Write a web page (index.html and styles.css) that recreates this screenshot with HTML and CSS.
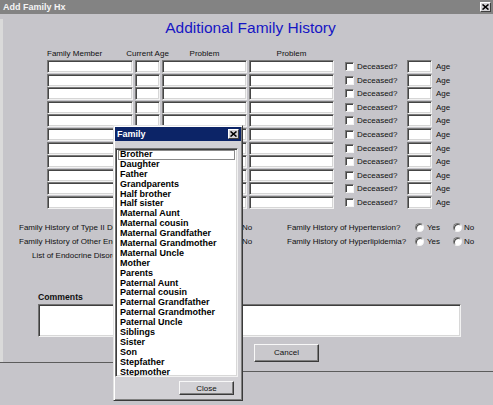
FILE: index.html
```html
<!DOCTYPE html>
<html>
<head>
<meta charset="utf-8">
<title>Add Family Hx</title>
<link rel="stylesheet" href="styles.css">
</head>
<body>
<div class="window">
  <div class="titlebar">
    <span class="title">Add Family Hx</span>
    <span class="x-btn"><svg width="7" height="6" viewBox="0 0 7 6"><path d="M0.5 0.5 L6.5 5.5 M6.5 0.5 L0.5 5.5" stroke="#000" stroke-width="1.6" fill="none"/></svg></span>
  </div>
  <div class="main">
    <h1 class="heading">Additional Family History</h1>
    <div class="head-row">
      <div class="hc w-fm left">Family Member</div>
      <div class="hc w-ca">Current Age</div>
      <div class="hc w-p">Problem</div>
      <div class="hc w-p">Problem</div>
    </div>
    <div class="rows">
      <div class="row"><input class="field w-fm"><input class="field w-ca"><input class="field w-p"><input class="field w-p"><input type="checkbox" class="chk"><span class="dec">Deceased?</span><input class="field w-age"><span class="age">Age</span></div>
      <div class="row"><input class="field w-fm"><input class="field w-ca"><input class="field w-p"><input class="field w-p"><input type="checkbox" class="chk"><span class="dec">Deceased?</span><input class="field w-age"><span class="age">Age</span></div>
      <div class="row"><input class="field w-fm"><input class="field w-ca"><input class="field w-p"><input class="field w-p"><input type="checkbox" class="chk"><span class="dec">Deceased?</span><input class="field w-age"><span class="age">Age</span></div>
      <div class="row"><input class="field w-fm"><input class="field w-ca"><input class="field w-p"><input class="field w-p"><input type="checkbox" class="chk"><span class="dec">Deceased?</span><input class="field w-age"><span class="age">Age</span></div>
      <div class="row"><input class="field w-fm"><input class="field w-ca"><input class="field w-p"><input class="field w-p"><input type="checkbox" class="chk"><span class="dec">Deceased?</span><input class="field w-age"><span class="age">Age</span></div>
      <div class="row"><input class="field w-fm"><input class="field w-ca"><input class="field w-p"><input class="field w-p"><input type="checkbox" class="chk"><span class="dec">Deceased?</span><input class="field w-age"><span class="age">Age</span></div>
      <div class="row"><input class="field w-fm"><input class="field w-ca"><input class="field w-p"><input class="field w-p"><input type="checkbox" class="chk"><span class="dec">Deceased?</span><input class="field w-age"><span class="age">Age</span></div>
      <div class="row"><input class="field w-fm"><input class="field w-ca"><input class="field w-p"><input class="field w-p"><input type="checkbox" class="chk"><span class="dec">Deceased?</span><input class="field w-age"><span class="age">Age</span></div>
      <div class="row"><input class="field w-fm"><input class="field w-ca"><input class="field w-p"><input class="field w-p"><input type="checkbox" class="chk"><span class="dec">Deceased?</span><input class="field w-age"><span class="age">Age</span></div>
      <div class="row"><input class="field w-fm"><input class="field w-ca"><input class="field w-p"><input class="field w-p"><input type="checkbox" class="chk"><span class="dec">Deceased?</span><input class="field w-age"><span class="age">Age</span></div>
      <div class="row"><input class="field w-fm"><input class="field w-ca"><input class="field w-p"><input class="field w-p"><input type="checkbox" class="chk"><span class="dec">Deceased?</span><input class="field w-age"><span class="age">Age</span></div>
    </div>
    <div class="q-rows">
      <div class="q-row">
        <div class="q-left">
          <span class="q-label">Family History of Type II Diabetes?</span>
          <input type="radio" name="dm" class="radio"><span class="r-yes">Yes</span>
          <input type="radio" name="dm" class="radio"><span class="r-no">No</span>
        </div>
        <div class="q-right">
          <span class="q-label-r">Family History of Hypertension?</span>
          <input type="radio" name="htn" class="radio"><span class="r-yes">Yes</span>
          <input type="radio" name="htn" class="radio"><span class="r-no">No</span>
        </div>
      </div>
      <div class="q-row">
        <div class="q-left">
          <span class="q-label">Family History of Other Endocrine?</span>
          <input type="radio" name="en" class="radio"><span class="r-yes">Yes</span>
          <input type="radio" name="en" class="radio"><span class="r-no">No</span>
        </div>
        <div class="q-right">
          <span class="q-label-r">Family History of Hyperlipidemia?</span>
          <input type="radio" name="lip" class="radio"><span class="r-yes">Yes</span>
          <input type="radio" name="lip" class="radio"><span class="r-no">No</span>
        </div>
      </div>
      <div class="q-row">
        <div class="q-left">
          <span class="q-label indent">List of Endocrine Disorders</span>
        </div>
      </div>
    </div>
    <div class="comments-label">Comments</div>
    <div class="comments"></div>
    <div class="buttons">
      <button class="btn">OK</button>
      <button class="btn">Cancel</button>
    </div>
  </div>
  <div class="footer">
    <div class="f-left"></div>
    <div class="f-right"></div>
  </div>
</div>

<div class="dialog">
  <div class="dlg-title">
    <span>Family</span>
    <span class="x-btn"><svg width="7" height="6" viewBox="0 0 7 6"><path d="M0.5 0.5 L6.5 5.5 M6.5 0.5 L0.5 5.5" stroke="#000" stroke-width="1.6" fill="none"/></svg></span>
  </div>
  <ul class="listbox">
    <li class="focus">Brother</li>
    <li>Daughter</li>
    <li>Father</li>
    <li>Grandparents</li>
    <li>Half brother</li>
    <li>Half sister</li>
    <li>Maternal Aunt</li>
    <li>Maternal cousin</li>
    <li>Maternal Grandfather</li>
    <li>Maternal Grandmother</li>
    <li>Maternal Uncle</li>
    <li>Mother</li>
    <li>Parents</li>
    <li>Paternal Aunt</li>
    <li>Paternal cousin</li>
    <li>Paternal Grandfather</li>
    <li>Paternal Grandmother</li>
    <li>Paternal Uncle</li>
    <li>Siblings</li>
    <li>Sister</li>
    <li>Son</li>
    <li>Stepfather</li>
    <li>Stepmother</li>
  </ul>
  <div class="dlg-actions"><button class="btn btn-close">Close</button></div>
</div>
</body>
</html>
```

FILE: styles.css
```css
* { box-sizing: border-box; }
html, body { margin: 0; padding: 0; }
body {
  width: 493px;
  height: 405px;
  overflow: hidden;
  position: relative;
  background: #c6c5ca;
  font-family: "Liberation Sans", Arial, sans-serif;
  font-size: 8px;
  color: #101010;
}

.titlebar {
  height: 14px;
  background: #838383;
  display: flex;
  align-items: center;
  justify-content: space-between;
  padding: 0 2px 0 3px;
}
.title { color: #f4f4f4; font-weight: bold; font-size: 9px; }
.x-btn {
  width: 11px;
  height: 10px;
  background: #d4d3d6;
  border: 1px solid;
  border-color: #fff #404040 #404040 #fff;
  display: flex;
  align-items: center;
  justify-content: center;
}

.main { border-left: 3px solid #dadada; }

.heading {
  margin: 5px 0 0;
  padding-left: 5px;
  text-align: center;
  font-size: 15.5px;
  line-height: 18px;
  font-weight: normal;
  color: #1616c4;
}

.head-row {
  display: flex;
  margin: 12px 0 0 44px;
  height: 10px;
  line-height: 10px;
}
.hc { display: flex; justify-content: center; white-space: nowrap; }
.hc.left { justify-content: flex-start; }

.w-fm { width: 86px; }
.w-ca { width: 25px; margin-left: 2px; }
.w-p { width: 85px; margin-left: 2px; }
.w-age { width: 25px; }

.rows {
  margin: 1px 0 0 44px;
  display: flex;
  flex-direction: column;
  gap: 0.6px;
}
.row { display: flex; align-items: center; height: 13px; }

.field {
  height: 13px;
  margin-top: 0;
  margin-bottom: 0;
  padding: 0;
  background: #fff;
  border: 1px solid;
  border-color: #7a7a7a #f2f2f2 #f2f2f2 #7a7a7a;
  box-shadow: inset 1px 1px #454545, inset -1px -1px #d6d6d6;
  outline: none;
  font: inherit;
}

.chk {
  -webkit-appearance: none;
  appearance: none;
  width: 9px;
  height: 9px;
  margin: 0 0 0 11px;
  background: #fff;
  border: 1px solid;
  border-color: #7a7a7a #f4f4f4 #f4f4f4 #7a7a7a;
  box-shadow: inset 1px 1px #454545;
}
.dec { width: 50px; margin-left: 3px; white-space: nowrap; }
.age { margin-left: 4px; }

.q-rows { margin: 12px 0 0 16px; }
.q-row { display: flex; align-items: center; height: 14px; }
.q-left { width: 268px; display: flex; align-items: center; }
.q-right { display: flex; align-items: center; }
.q-label { width: 186px; white-space: nowrap; }
.q-label.indent { padding-left: 13px; width: auto; }
.q-label-r { width: 128px; white-space: nowrap; }

.radio {
  -webkit-appearance: none;
  appearance: none;
  width: 9px;
  height: 9px;
  margin: 0;
  border-radius: 50%;
  background: #fff;
  border: 1px solid;
  border-color: #7c7c7c #f4f4f4 #f4f4f4 #7c7c7c;
  box-shadow: inset 1px 1px #4a4a4a;
}
.r-yes { width: 15px; margin-left: 3px; }
.q-left .r-yes { width: 11px; }
.r-no { margin-left: 2px; }
.q-right .radio + .r-yes + .radio { margin-left: 11px; }
.q-left .radio + .r-yes + .radio { margin-left: 3px; }

.comments-label {
  margin: 29px 0 0 35px;
  height: 11px;
  line-height: 11px;
  font-weight: bold;
  font-size: 8.7px;
}
.comments {
  margin: 1px 0 0 35px;
  width: 423px;
  height: 33px;
  background: #fff;
  border: 1px solid;
  border-color: #727272 #f2f2f2 #f2f2f2 #727272;
  box-shadow: inset 1px 1px #3e3e3e, inset -1px -1px #d8d8d8;
}

.buttons {
  display: flex;
  gap: 11px;
  margin: 7px 0 0 175px;
}
.btn {
  width: 65px;
  height: 18px;
  margin: 0;
  padding: 0;
  background: #c9c8cc;
  border: 1px solid;
  border-color: #f8f8f8 #3a3a3a #3a3a3a #f8f8f8;
  box-shadow: inset -1px -1px #808080;
  font-family: "Liberation Sans", Arial, sans-serif;
  font-size: 8px;
  color: #111;
}

.footer { display: flex; height: 10px; }
.f-left { width: 113px; border-top: 1px solid #5c5c5c; }
.f-right { flex: 1; border-bottom: 1px solid #5c5c5c; }

/* Floating "Family" picker window over the form */
.dialog {
  position: absolute;
  left: 113px;
  top: 125px;
  width: 130px;
  height: 276px;
  padding: 1px;
  background: #d2d1d5;
  border: 1px solid;
  border-color: #e4e4e4 #3a3a3a #3a3a3a #e4e4e4;
  box-shadow: inset 1px 1px #fff, inset -1px -1px #808080;
}
.dlg-title {
  height: 14px;
  background: #0c2467;
  color: #fff;
  font-weight: bold;
  font-size: 9px;
  display: flex;
  align-items: center;
  justify-content: space-between;
  padding: 0 2px 0 2px;
}
.listbox {
  list-style: none;
  margin: 7px 0 0;
  padding: 1px 2px;
  width: 123px;
  height: 229px;
  background: #fff;
  border: 1px solid;
  border-color: #727272 #f2f2f2 #f2f2f2 #727272;
  box-shadow: inset 1px 1px #3e3e3e, inset -1px -1px #d8d8d8;
  overflow: hidden;
  font-weight: bold;
  font-size: 9px;
  color: #000;
}
.listbox li {
  height: 9.9px;
  line-height: 9.9px;
  padding-left: 2px;
  white-space: nowrap;
}
.listbox li.focus {
  outline: 1px solid #8a8a8a;
  outline-offset: -1px;
}
.dlg-actions {
  display: flex;
  justify-content: flex-end;
  padding-right: 7px;
  margin-top: 4px;
}
.btn-close { width: 55px; height: 14px; background: #d2d1d5; }
```
